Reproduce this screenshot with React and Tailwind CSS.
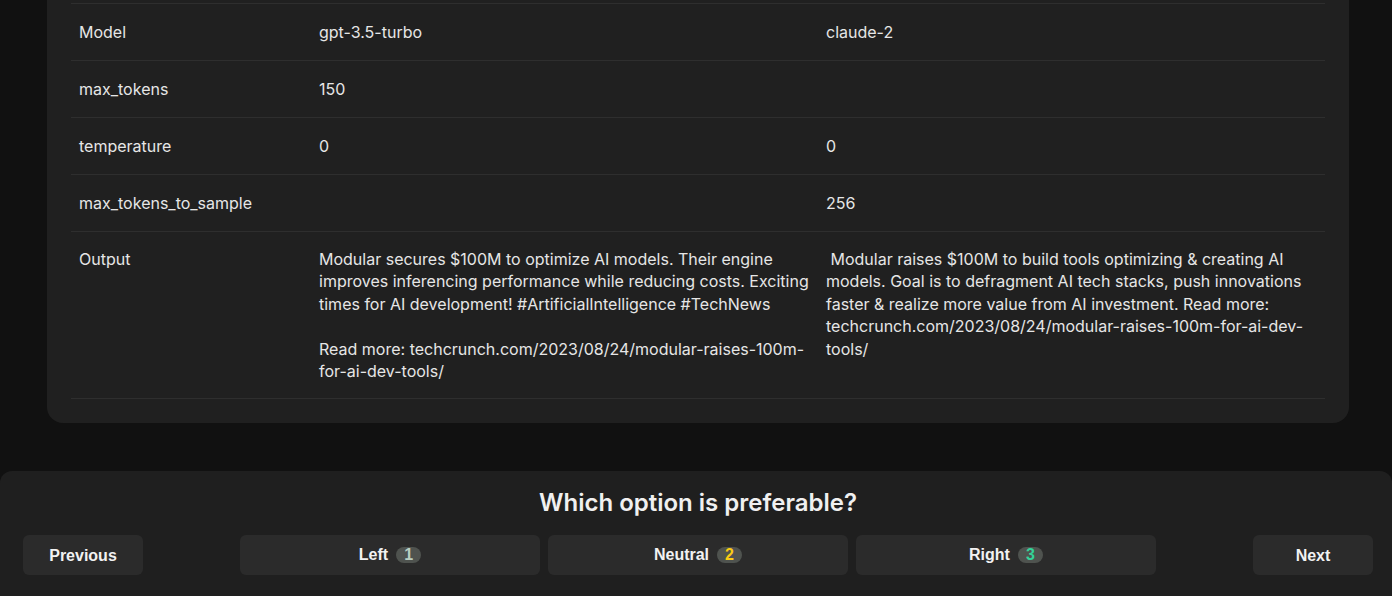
import React from 'react';

const rows = [
  { label: 'Model', left: 'gpt-3.5-turbo', right: 'claude-2' },
  { label: 'max_tokens', left: '150', right: '' },
  { label: 'temperature', left: '0', right: '0' },
  { label: 'max_tokens_to_sample', left: '', right: '256' },
];

const outputLeft =
  'Modular secures $100M to optimize AI models. Their engine improves inferencing performance while reducing costs. Exciting times for AI development! #ArtificialIntelligence #TechNews\n\nRead more: techcrunch.com/2023/08/24/modular-raises-100m-for-ai-dev-tools/';
const outputRight =
  ' Modular raises $100M to build tools optimizing & creating AI models. Goal is to defragment AI tech stacks, push innovations faster & realize more value from AI investment. Read more: techcrunch.com/2023/08/24/modular-raises-100m-for-ai-dev-tools/';

const Choice = ({ label, num, numColor }) => (
  <button className="w-[300px] h-10 rounded-md bg-[#2b2b2b] flex items-center justify-center gap-2 text-[16px] font-bold text-[#f2f2f2] font-['Liberation_Sans',Arial,sans-serif]">
    {label}
    <span className={`inline-flex items-center justify-center h-[16px] w-[25px] rounded-full bg-[#4f534f] text-[16px] leading-none ${numColor}`}>
      {num}
    </span>
  </button>
);

const App = () => {
  return (
    <div className="min-h-[596px] bg-[#111111] font-['Inter','Noto_Sans',sans-serif] overflow-hidden">
      <div className="ml-[47px] mr-[43px] bg-[#202020] rounded-b-2xl px-6 pt-[3px] pb-6">
        <table className="w-full table-fixed border-collapse text-[16px] text-[#e6e6e6]">
          <colgroup>
            <col className="w-[240px]" />
            <col />
            <col />
          </colgroup>
          <tbody>
            {rows.map((r) => (
              <tr key={r.label} className="border-t border-b border-[#2e2e2e]">
                <td className="px-2 py-4 leading-6 align-top">{r.label}</td>
                <td className="px-2 py-4 leading-6 align-top">{r.left}</td>
                <td className="px-2 py-4 leading-6 align-top">{r.right}</td>
              </tr>
            ))}
            <tr className="border-b border-[#2e2e2e]">
              <td className="px-2 py-4 leading-[22.4px] align-top">Output</td>
              <td className="px-2 py-4 leading-[22.4px] align-top whitespace-pre-wrap">{outputLeft}</td>
              <td className="px-2 py-4 leading-[22.4px] align-top whitespace-pre-wrap">{outputRight}</td>
            </tr>
          </tbody>
        </table>
      </div>

      <div className="mt-[48px] bg-[#1f1f1f] rounded-t-xl pt-4 pb-[21px] pl-[23px] pr-[19px]">
        <h2 className="text-center text-[24px] leading-8 font-semibold text-[#f0f0f0]">
          Which option is preferable?
        </h2>
        <div className="mt-4 flex items-center justify-between">
          <button className="w-[120px] h-10 pt-px rounded-md bg-[#2b2b2b] text-[16px] font-bold text-[#f2f2f2] font-['Liberation_Sans',Arial,sans-serif]">
            Previous
          </button>
          <div className="flex gap-2">
            <Choice label="Left" num="1" numColor="text-[#b9cfc2]" />
            <Choice label="Neutral" num="2" numColor="text-[#facc15]" />
            <Choice label="Right" num="3" numColor="text-[#34d399]" />
          </div>
          <button className="w-[120px] h-10 pt-px rounded-md bg-[#2b2b2b] text-[16px] font-bold text-[#f2f2f2] font-['Liberation_Sans',Arial,sans-serif]">
            Next
          </button>
        </div>
      </div>
    </div>
  );
};

export default App;
